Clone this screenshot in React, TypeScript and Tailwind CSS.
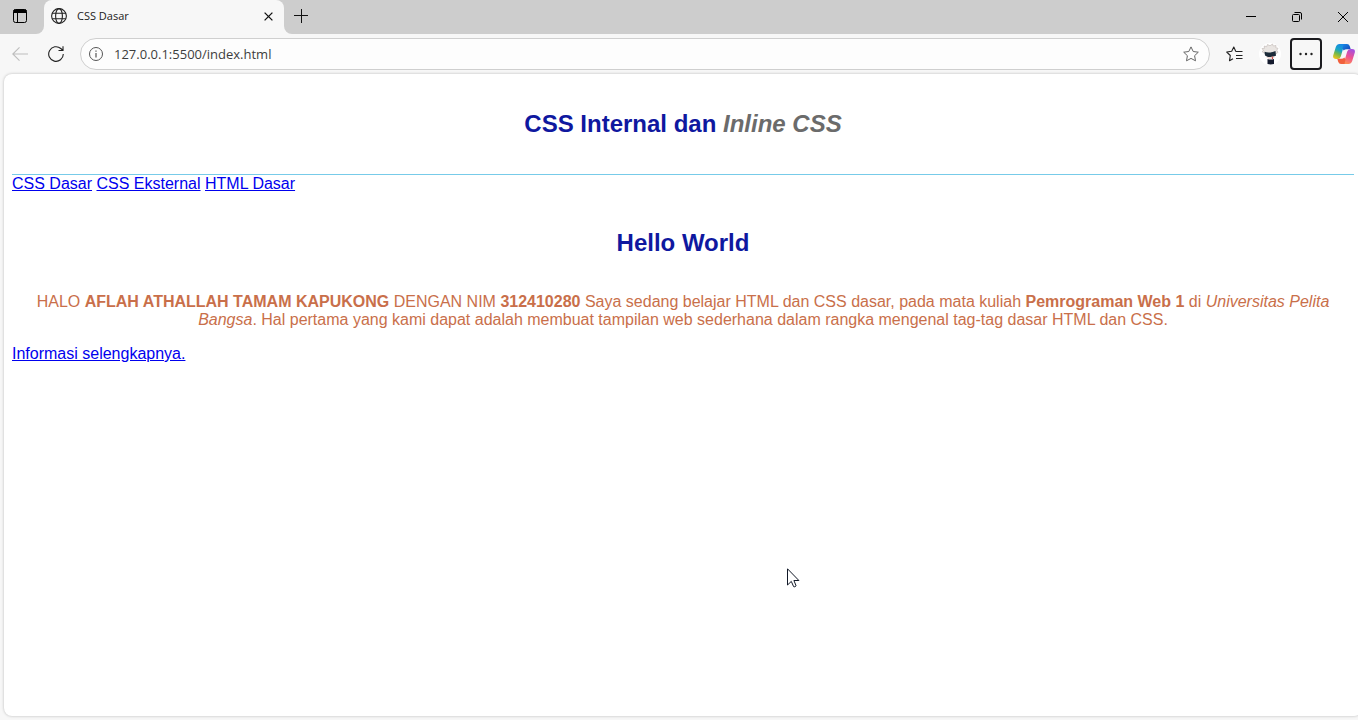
import React from 'react';

function TitleBar() {
  return (
    <header className="flex h-[34px] bg-[#f7f7f7]">
      <div className="flex w-11 rounded-br-lg bg-[#cdcdcd] pb-0.5 pl-[13px]">
        <button type="button" aria-label="Tab actions">
          <svg className="block" width="14" height="14" viewBox="0 0 14 14" fill="none" stroke="#000" strokeWidth="1">
            <rect x="0.5" y="0.5" width="13" height="13" rx="2" />
            <path d="M1 1h12v2.500H1z" fill="#000" />
            <path d="M4.500 4v9.500" />
          </svg>
        </button>
      </div>
      <div className="flex w-60 bg-[#cdcdcd]">
        <div className="flex flex-1 items-center rounded-t-lg bg-[#f7f7f7] pr-[11px] pb-0.5 pl-[7px]">
          <svg className="block shrink-0" width="16" height="16" viewBox="0 0 16 16" fill="none" stroke="#222" strokeWidth="1.1">
            <circle cx="8" cy="8" r="7.4" />
            <ellipse cx="8" cy="8" rx="3.4" ry="7.4" />
            <path d="M1.2 5.3h13.6M1.2 10.7h13.6" />
          </svg>
          <span className="ml-[10px] flex-1 font-['Open_Sans',sans-serif] text-[11px] text-[#1b1b1b]">CSS Dasar</span>
          <button type="button" aria-label="Close tab">
            <svg className="block" width="9" height="9" viewBox="0 0 9 9" stroke="#111" strokeWidth="1.3">
              <path d="M.6.6l7.8 7.8M8.4.6L.6 8.4" />
            </svg>
          </button>
        </div>
      </div>
      <div className="flex flex-1 items-center rounded-bl-lg bg-[#cdcdcd] pr-[10px] pl-[10px]">
        <button type="button" aria-label="New tab" className="mr-auto pb-0.5">
          <svg className="block" width="14" height="14" viewBox="0 0 14 14" stroke="#111" strokeWidth="1">
            <path d="M0 6.5h14M7.5 0v14" />
          </svg>
        </button>
        <div className="flex items-center gap-9">
          <button type="button" aria-label="Minimize">
            <svg className="block" width="10" height="10" viewBox="0 0 10 10" stroke="#000">
              <path d="M0 4.5h10" />
            </svg>
          </button>
          <button type="button" aria-label="Restore">
            <svg className="block" width="10" height="10" viewBox="0 0 10 10" fill="none" stroke="#000">
              <rect x=".5" y="2.5" width="7" height="7" rx="1" />
              <path d="M2.5.5H8A1.5 1.5 0 0 1 9.5 2v5.5" />
            </svg>
          </button>
          <button type="button" aria-label="Close window">
            <svg className="block" width="10" height="10" viewBox="0 0 10 10" stroke="#000">
              <path d="M0 0l10 10M10 0L0 10" />
            </svg>
          </button>
        </div>
      </div>
    </header>
  );
}

const STAR = 'M8 .9l2.200 4.600 5.100.7-3.700 3.500.9 5.100L8 12.400l-4.500 2.400.9-5.100L.7 6.200l5.100-.7z';

function Avatar() {
  return (
    <svg className="block" width="22" height="22" viewBox="0 0 22 22">
      <circle cx="11" cy="11" r="11" fill="#fff" />
      <path d="M5.500 10.500L3 8.500l1.500-1L3 5.500l2.500-.2L5.200 3l2.500.7L8.500 1.500l2.500 1.300L13.500 1l.8 2L17 2.500l-.2 2.200 2.200.6-1.200 2 1.200 2-2.500 2z" fill="#e9e5e2" stroke="#bdb6b1" strokeWidth=".6" />
      <path d="M7 11.500h9l-.5 3-2.500 2-3-.2-2.300-2z" fill="#ecd8d4" />
      <path d="M5.500 8.800q5 1.800 11-.8l.5 4.700q-4.500 1.500-8 1.300L6 12.500z" fill="#1c2c3a" />
      <path d="M8.500 16q3 1.200 6.500 0v5q-3.500.8-6.500 0z" fill="#151b2e" />
      <path d="M13.200 13.500l.4 2.500" stroke="#c44" strokeWidth="1" />
    </svg>
  );
}

function CopilotLogo() {
  return (
    <svg className="block" width="22" height="20" viewBox="0 0 22 20">
      <defs>
        <linearGradient id="cool" x1=".6" y1="0" x2=".2" y2="1">
          <stop offset="0" stopColor="#1687e8" />
          <stop offset=".4" stopColor="#18a6c4" />
          <stop offset=".65" stopColor="#72b84c" />
          <stop offset="1" stopColor="#f5c518" />
        </linearGradient>
        <linearGradient id="warm" x1=".7" y1="0" x2=".3" y2="1">
          <stop offset="0" stopColor="#a44fe0" />
          <stop offset=".5" stopColor="#ee5290" />
          <stop offset="1" stopColor="#ff9150" />
        </linearGradient>
        <linearGradient id="fold" x1="0" y1="0" x2="1" y2="1">
          <stop offset="0" stopColor="#1689e8" />
          <stop offset="1" stopColor="#1740b5" />
        </linearGradient>
      </defs>
      <path d="M6.500 0H13q-2 1-2.600 3.500L7.800 12.500Q7 15 4.500 15H3Q-.5 15 .2 11.500L2.800 3Q3.800 0 6.500 0z" fill="url(#cool)" />
      <path d="M10.500 0H14q2 0 2.700 2l1 3.200H14q-2.500 0-3.300 1.300l-1.200-2z" fill="url(#fold)" />
      <path d="M15.500 20H9q2-1 2.600-3.500l2.600-9Q15 5 17.500 5H19q3.500 0 2.800 3.500L19.200 17q-1 3-3.700 3z" fill="url(#warm)" />
      <path d="M11.500 20H8q-2 0-2.700-2l-1-3.200H8q2.500 0 3.300-1.300l1.200 2z" fill="#f1603d" />
    </svg>
  );
}

function Toolbar() {
  return (
    <div className="flex h-10 items-center bg-[#f7f7f7] pr-[3px] pl-3">
      <button type="button" aria-label="Back" disabled>
        <svg className="block" width="16" height="14" viewBox="0 0 16 14" fill="none" stroke="#bdbdbd" strokeWidth="1.1">
          <path d="M16 7H.8M7.500.4L.8 7l6.700 6.600" />
        </svg>
      </button>
      <button type="button" aria-label="Refresh" className="ml-5">
        <svg className="block" width="16" height="16" viewBox="0 0 16 16" fill="none" stroke="#222" strokeWidth="1.1">
          <path d="M15.300 8A7.300 7.300 0 1 1 12.800 2.500L15 4.500M15 .3v4.200h-4.500" />
        </svg>
      </button>
      <div className="ml-4 flex h-8 flex-1 items-center rounded-full border border-[#cfcfcf] bg-[#fdfdfd] pr-[10px] pl-2">
        <button type="button" aria-label="Site information">
          <svg className="block" width="14" height="14" viewBox="0 0 14 14" fill="none" stroke="#555">
            <circle cx="7" cy="7" r="6.5" />
            <path d="M7 6v4.500M7 3.500v1.300" strokeWidth="1.2" />
          </svg>
        </button>
        <input
          type="text"
          aria-label="Address"
          defaultValue="127.0.0.1:5500/index.html"
          className="ml-[11px] min-w-0 flex-1 bg-transparent font-['Open_Sans',sans-serif] text-[13px] leading-5 text-[#3d3d3d] outline-none"
        />
        <button type="button" aria-label="Add to favorites">
          <svg className="block" width="16" height="16" viewBox="0 0 16 16" fill="none" stroke="#666" strokeLinejoin="round">
            <path d={STAR} />
          </svg>
        </button>
      </div>
      <button type="button" aria-label="Favorites" className="ml-4">
        <svg className="block" width="17" height="16" viewBox="0 0 17 16" fill="none" stroke="#222" strokeWidth="1.1" strokeLinejoin="round">
          <path d="M10.500 5.500L9.700 5.300 7.800 1 5.700 5.300.7 6l3.600 3.500-.8 5.200 3.500-2M10 5.500h6.500M10 9.500h6.500M10 12.500h6.500" />
        </svg>
      </button>
      <button type="button" aria-label="Profile" className="ml-4">
        <Avatar />
      </button>
      <button type="button" aria-label="Settings and more" className="ml-[9px] flex h-8 w-8 items-center justify-center rounded-[4px] border-2 border-[#1b1b1f]">
        <svg className="block" width="14" height="4" viewBox="0 0 14 4" fill="#222">
          <circle cx="1.5" cy="2" r="1.2" />
          <circle cx="7" cy="2" r="1.2" />
          <circle cx="12.5" cy="2" r="1.2" />
        </svg>
      </button>
      <button type="button" aria-label="Copilot" className="ml-[11px]">
        <CopilotLogo />
      </button>
    </div>
  );
}

export default function App() {
  return (
    <div className="flex min-h-screen flex-col overflow-hidden bg-[#f7f7f7]">
      <TitleBar />
      <Toolbar />
      <main className="-mr-1 mb-1 ml-1 flex-1 rounded-lg bg-white p-2 font-['Liberation_Sans',Arial,sans-serif] text-base leading-[18px] shadow-[0_0_3px_rgba(0,0,0,0.25)]">
        <div className="border-b border-[#77cbe9] pt-7 pb-9 text-center">
          <h1 className="text-2xl leading-7 font-bold text-[#0f189f]">
            CSS Internal dan <i className="text-[#6b6b6b]">Inline CSS</i>
          </h1>
        </div>
        <nav className="text-[#0000ee]">
          <a className="underline" href="#dasar">CSS Dasar</a>{' '}
          <a className="underline" href="#eksternal">CSS Eksternal</a>{' '}
          <a className="underline" href="#html">HTML Dasar</a>
        </nav>
        <h1 className="py-9 text-center text-2xl leading-7 font-bold text-[#0f189f]">Hello World</h1>
        <p className="text-center text-[#c96f4a]">
          HALO <b>AFLAH ATHALLAH TAMAM KAPUKONG</b> DENGAN NIM <b>312410280</b> Saya sedang belajar HTML dan CSS dasar, pada mata kuliah{' '}
          <b>Pemrograman Web 1</b> di <i>Universitas Pelita Bangsa</i>. Hal pertama yang kami dapat adalah membuat tampilan web sederhana dalam rangka mengenal tag-tag dasar HTML dan CSS.
        </p>
        <a href="#info" className="mt-4 inline-block text-[#0000ee] underline">
          Informasi selengkapnya.
        </a>
      </main>
      <svg className="pointer-events-none absolute top-[568px] left-[787px]" width="13" height="20" viewBox="0 0 13 20" aria-hidden="true">
        <path d="M.5.800v16.200l3.800-3.600 2.300 5.200q1.200.8 2.500-.8L6.900 12.500h5.000z" fill="#fff" stroke="#111827" strokeWidth="1" strokeLinejoin="round" />
      </svg>
    </div>
  );
}
